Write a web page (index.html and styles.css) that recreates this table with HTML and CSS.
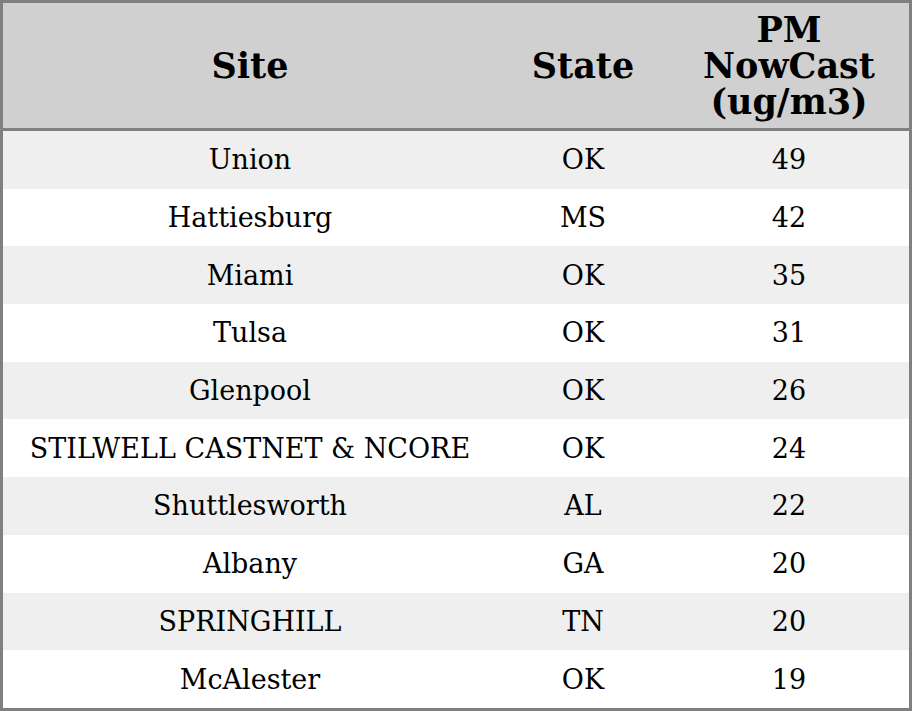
FILE: index.html
```html
<!DOCTYPE html>
<html>
<head>
<meta charset="utf-8">
<link rel="stylesheet" href="styles.css">
</head>
<body>
<table class="grid">
  <thead>
    <tr>
      <th class="c-site">Site</th>
      <th class="c-state">State</th>
      <th class="c-pm">PM<br>NowCast<br>(ug/m3)</th>
    </tr>
  </thead>
  <tbody>
    <tr><td>Union</td><td>OK</td><td>49</td></tr>
    <tr><td>Hattiesburg</td><td>MS</td><td>42</td></tr>
    <tr><td>Miami</td><td>OK</td><td>35</td></tr>
    <tr><td>Tulsa</td><td>OK</td><td>31</td></tr>
    <tr><td>Glenpool</td><td>OK</td><td>26</td></tr>
    <tr><td>STILWELL CASTNET &amp; NCORE</td><td>OK</td><td>24</td></tr>
    <tr><td>Shuttlesworth</td><td>AL</td><td>22</td></tr>
    <tr><td>Albany</td><td>GA</td><td>20</td></tr>
    <tr><td>SPRINGHILL</td><td>TN</td><td>20</td></tr>
    <tr><td>McAlester</td><td>OK</td><td>19</td></tr>
  </tbody>
</table>
</body>
</html>
```
FILE: styles.css
```css
html, body {
  margin: 0;
  padding: 0;
  background: #ffffff;
}
.grid {
  box-sizing: border-box;
  width: 912px;
  height: 711px;
  border: 3px solid #808080;
  border-collapse: separate;
  border-spacing: 0;
  font-family: "DejaVu Serif", serif;
  color: #000;
  table-layout: fixed;
}
.grid th {
  background: #d0d0d0;
  font-size: 35px;
  font-weight: bold;
  line-height: 36px;
  height: 125px;
  padding: 0;
  border-bottom: 3px solid #808080;
  text-align: center;
  vertical-align: middle;
}
.c-site { width: 494px; }
.c-state { width: 172px; }
.c-pm { width: 240px; }
.grid td {
  font-size: 27px;
  text-align: center;
  vertical-align: middle;
  padding: 0;
  height: 57px;
}
.grid tbody tr:nth-child(odd) td {
  background: #efefef;
}
.grid tbody tr:nth-child(even) td {
  background: #ffffff;
}
```
